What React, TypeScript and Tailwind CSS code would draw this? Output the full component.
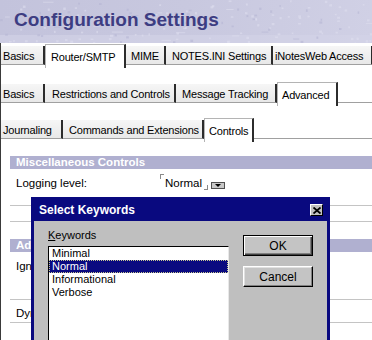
import React from "react";

type Tab = { label: string; w: string; pl: string };

const row1: Tab[] = [
  { label: "Basics", w: "w-[44px]", pl: "pl-[2px]" },
  { label: "Router/SMTP", w: "w-[81px]", pl: "pl-[5px]" },
  { label: "MIME", w: "w-[40px]", pl: "pl-[5px]" },
  { label: "NOTES.INI Settings", w: "w-[107px]", pl: "pl-[6px]" },
  { label: "iNotesWeb Access", w: "w-[100px]", pl: "pl-[2px]" },
];

const row2: Tab[] = [
  { label: "Basics", w: "w-[44px]", pl: "pl-[2px]" },
  { label: "Restrictions and Controls", w: "w-[131px]", pl: "pl-[7px]" },
  { label: "Message Tracking", w: "w-[101px]", pl: "pl-[6px]" },
  { label: "Advanced", w: "w-[61px]", pl: "pl-[4px]" },
];

const row3: Tab[] = [
  { label: "Journaling", w: "w-[62px]", pl: "pl-[2px]" },
  { label: "Commands and Extensions", w: "w-[141px]", pl: "pl-[6px]" },
  { label: "Controls", w: "w-[50px]", pl: "pl-[4px]" },
];

// deterministic speckle for the circuit-board backdrop
function speckles() {
  let s = 11;
  const rnd = () => {
    s = (s * 16807) % 2147483647;
    return s / 2147483647;
  };
  const out: { x: number; y: number; w: number; h: number; c: string }[] = [];
  for (let i = 0; i < 170; i++) {
    const x = rnd() * 372;
    const y = rnd() * 43;
    const long = rnd() > 0.88;
    const light = rnd() > 0.3;
    out.push({
      x,
      y,
      w: long ? 4 + rnd() * 7 : 1.5 + rnd() * 1.5,
      h: long ? 1 : 1.5 + rnd(),
      c: light ? "#dedeef" : "#b6b6d3",
    });
  }
  return out;
}

const dots = speckles();

function Header() {
  return (
    <div className="relative h-[43px] bg-gradient-to-r from-[#c3c3dc] via-[#c8c8df] to-[#d0d0e5] overflow-hidden">
      <svg className="absolute inset-0" width="372" height="43">
        <rect x="0" y="35" width="372" height="8" fill="#d4d4e7" opacity="0.6" />
        {dots.map((d, i) => (
          <rect key={i} x={d.x} y={d.y} width={d.w} height={d.h} fill={d.c} opacity="0.6" />
        ))}
      </svg>
      <div className="relative pl-[14px] pt-[8px] text-[19px] leading-[24px] font-bold text-[#3d3d82] font-['Liberation_Sans',Arial,sans-serif]">
        Configuration Settings
      </div>
    </div>
  );
}

function TabRow({ tabs, active }: { tabs: Tab[]; active: number }) {
  return (
    <div className="flex h-[24px] items-start text-[11px] tracking-[-0.2px] whitespace-nowrap">
      {tabs.map((t, i) =>
        i === active ? (
          <div
            key={t.label}
            className={`${t.w} ${t.pl} h-[24px] shrink-0 bg-white border-l border-t border-[#b4b4b4] border-r-2 border-r-[#2c2c2c] flex items-center pt-[1px]`}
          >
            {t.label}
          </div>
        ) : (
          <div
            key={t.label}
            className={`${t.w} ${t.pl} mt-[2px] h-[19px] shrink-0 overflow-hidden bg-gradient-to-b from-[#f6f6f6] to-[#e8e8e8] border-b border-[#a0a0a0] border-r-2 border-r-[#2c2c2c] flex items-center pt-[2px]`}
          >
            {t.label}
          </div>
        )
      )}
      <div className="flex-1 mt-[2px] h-[19px] border-b border-[#a0a0a0]" />
    </div>
  );
}

function Section({ title }: { title: string }) {
  return (
    <div className="h-[13px] bg-[#b0b0d0] pl-[6px] text-white font-bold text-[11.5px] leading-[13px] whitespace-nowrap">
      {title}
    </div>
  );
}

function NormalField() {
  return (
    <div className="flex items-start">
      <div className="relative flex items-start pl-[5px] pr-[6px]">
        <span className="absolute left-0 top-[-2px] w-[4px] h-[5px] border-l border-t border-[#8a8a8a]" />
        <span className="text-[11.5px] leading-[14px]">Normal</span>
        <span className="absolute right-0 top-[9px] w-[4px] h-[5px] border-r border-b border-[#8a8a8a]" />
      </div>
      <div className="ml-[3px] mt-[6px] w-[14px] h-[7px] bg-[#c8c8c8] border border-[#505050] flex items-center justify-center">
        <svg width="6" height="3" viewBox="0 0 6 3">
          <path d="M0 0 L6 0 L3 3 Z" fill="#000" />
        </svg>
      </div>
    </div>
  );
}

function Dialog() {
  const items = ["Minimal", "Normal", "Informational", "Verbose"];
  return (
    <div className="absolute left-[31px] top-[197px] w-[299px] h-[150px] bg-[#09097f] flex flex-col font-['Liberation_Sans',Arial,sans-serif]">
      <div className="h-[24px] shrink-0 flex items-center pl-[8px] pr-[7px] pt-[1px]">
        <span className="text-white font-bold text-[12px] flex-1">Select Keywords</span>
        <div className="w-[13px] h-[12px] mt-[1px] bg-[#c0c0c0] border border-t-white border-l-white border-b-black border-r-black flex items-center justify-center">
          <svg width="8" height="7" viewBox="0 0 8 7">
            <path d="M0.5 0.5 L7.5 6.5 M7.5 0.5 L0.5 6.5" stroke="#000" strokeWidth="1.8" />
          </svg>
        </div>
      </div>
      <div className="flex-1 mx-[3px] bg-[#bfbfbf] flex">
        <div className="pl-[14px] pt-[7px]">
          <div className="text-[11px] leading-[14px]">
            <span className="underline">K</span>eywords
          </div>
          <div className="mt-[4px] w-[181px] h-[110px] bg-white border-t border-l border-black border-r border-b border-r-[#e8e8e8] border-b-[#e8e8e8] text-[11px] leading-[13px]">
            {items.map((it) =>
              it === "Normal" ? (
                <div key={it} className="h-[13px] bg-[#0a0a80] text-white pl-[2px] border border-dotted border-[#c8c890] leading-[11px]">
                  {it}
                </div>
              ) : (
                <div key={it} className="h-[13px] pl-[3px]">
                  {it}
                </div>
              )
            )}
          </div>
        </div>
        <div className="pl-[14px] pt-[14px] flex flex-col gap-[10px]">
          <div className="w-[70px] h-[21px] border border-black bg-[#c4c4c4] shadow-[inset_1px_1px_0_#fff,inset_-1px_-1px_0_#404040,inset_-2px_-2px_0_#808080] flex items-center justify-center text-[12px]">
            OK
          </div>
          <div className="w-[70px] h-[21px] bg-[#c4c4c4] border border-t-white border-l-white border-b-black border-r-black shadow-[inset_-1px_-1px_0_#808080,inset_1px_1px_0_#e0e0e0] flex items-center justify-center text-[12px]">
            Cancel
          </div>
        </div>
      </div>
    </div>
  );
}

export default function App() {
  return (
    <div className="relative w-[372px] h-[340px] overflow-hidden bg-white text-black font-['Liberation_Sans',Arial,sans-serif]">
      <Header />
      <div className="h-[297px] border-l border-[#3a3a3a]">
        <div className="pt-[1px]">
          <TabRow tabs={row1} active={1} />
        </div>
        <div className="mt-[14px]">
          <TabRow tabs={row2} active={3} />
        </div>
        <div className="mt-[12px]">
          <TabRow tabs={row3} active={2} />
        </div>
        <div className="mt-[14px] ml-[9px]">
          <Section title="Miscellaneous Controls" />
          <div className="h-[37px] border-b border-[#c4c4c4] flex items-start pt-[7px] pl-[6px]">
            <div className="w-[144px] text-[11.5px] leading-[14px]">Logging level:</div>
            <NormalField />
          </div>
          <div className="h-[16px] border-b border-[#c4c4c4]" />
          <div className="mt-[17px]">
            <Section title="Ad" />
          </div>
          <div className="h-[48px] border-b border-[#c4c4c4] pt-[7px] pl-[6px] text-[11.5px] leading-[14px]">
            Ign
          </div>
          <div className="h-[23px] border-b border-[#c4c4c4] pt-[6px] pl-[6px] text-[11.5px] leading-[14px]">
            Dyn
          </div>
        </div>
      </div>
      <Dialog />
    </div>
  );
}
